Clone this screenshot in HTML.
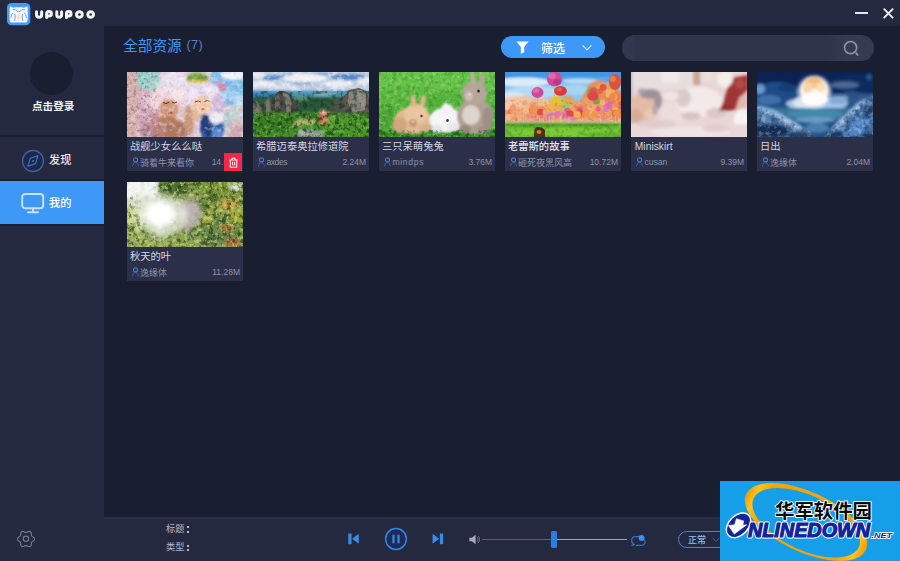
<!DOCTYPE html>
<html lang="zh"><head><meta charset="utf-8"><title>UPUPOO</title>
<style>
*{box-sizing:border-box;margin:0;padding:0}
html,body{width:900px;height:561px;overflow:hidden;background:#1a1e31}
body{position:relative;font-family:"Liberation Sans",sans-serif;color:#d9dde8;font-size:10px}
.abs{position:absolute}
svg{display:block;overflow:visible}
svg.cjk{display:block}
svg.cjk text{font-family:"Liberation Sans","Noto Sans CJK SC",sans-serif;font-size:1000px}
#titlebar{left:0;top:0;width:900px;height:26px;background:#242940}
#sidebar{left:0;top:26px;width:104px;height:535px;background:#242940}
#bottombar{left:104px;top:517px;width:796px;height:44px;background:#242940;box-shadow:inset 0 2px 0 #292e46}
.card{position:absolute;width:116px;height:99px;background:#2b3048}
.card .thumb{position:absolute;left:0;top:0;width:116px;height:65px;overflow:hidden}
.card .title{position:absolute;left:2.6px;top:68.1px;white-space:nowrap;font-size:10.3px;line-height:12px;color:#d2d6e1}
.card .title.lat{left:3.8px;top:69.3px}
.card .auth{position:absolute;left:12.5px;top:85px;white-space:nowrap;font-size:8.6px;line-height:10px;color:#8d93a9}
.card .auth.lat{left:13.4px;top:85.2px;font-size:8.6px}
.card .size{position:absolute;right:3px;top:85.2px;white-space:nowrap;font-size:8.5px;line-height:10px;color:#8d93a9}
.card .person{position:absolute;left:4.5px;top:85.2px}
</style></head>
<body>
<svg width="0" height="0" style="position:absolute;left:-10px;top:-10px" aria-hidden="true"><defs><filter id="b0" x="-20%" y="-20%" width="140%" height="140%"><feGaussianBlur stdDeviation="0.45"/></filter><filter id="b1" x="-20%" y="-20%" width="140%" height="140%"><feGaussianBlur stdDeviation="0.9"/></filter><filter id="b2" x="-20%" y="-20%" width="140%" height="140%"><feGaussianBlur stdDeviation="1.6"/></filter><filter id="b3" x="-20%" y="-20%" width="140%" height="140%"><feGaussianBlur stdDeviation="2.4"/></filter><filter id="tD" x="0" y="0" width="100%" height="100%" color-interpolation-filters="sRGB"><feTurbulence type="fractalNoise" baseFrequency="0.22" numOctaves="3" seed="4"/><feColorMatrix type="matrix" values="0 0 0 0 0.063  0 0 0 0 0.157  0 0 0 0 0.055  5 0 0 0 -2.4"/><feComposite in2="SourceGraphic" operator="in"/></filter><filter id="tY" x="0" y="0" width="100%" height="100%" color-interpolation-filters="sRGB"><feTurbulence type="fractalNoise" baseFrequency="0.26" numOctaves="3" seed="9"/><feColorMatrix type="matrix" values="0 0 0 0 0.839  0 0 0 0 0.910  0 0 0 0 0.471  0 5 0 0 -2.6"/><feComposite in2="SourceGraphic" operator="in"/></filter><filter id="tW" x="0" y="0" width="100%" height="100%" color-interpolation-filters="sRGB"><feTurbulence type="fractalNoise" baseFrequency="0.2" numOctaves="3" seed="14"/><feColorMatrix type="matrix" values="0 0 0 0 1.000  0 0 0 0 1.000  0 0 0 0 1.000  0 0 5 0 -2.5"/><feComposite in2="SourceGraphic" operator="in"/></filter><filter id="tP" x="0" y="0" width="100%" height="100%" color-interpolation-filters="sRGB"><feTurbulence type="fractalNoise" baseFrequency="0.3" numOctaves="3" seed="21"/><feColorMatrix type="matrix" values="0 0 0 0 0.471  0 0 0 0 0.235  0 0 0 0 0.314  5 0 0 0 -2.6"/><feComposite in2="SourceGraphic" operator="in"/></filter><filter id="tR" x="0" y="0" width="100%" height="100%" color-interpolation-filters="sRGB"><feTurbulence type="fractalNoise" baseFrequency="0.3" numOctaves="3" seed="27"/><feColorMatrix type="matrix" values="0 0 0 0 0.839  0 0 0 0 0.235  0 0 0 0 0.275  5 0 0 0 -2.5"/><feComposite in2="SourceGraphic" operator="in"/></filter><filter id="tN" x="0" y="0" width="100%" height="100%" color-interpolation-filters="sRGB"><feTurbulence type="fractalNoise" baseFrequency="0.16" numOctaves="3" seed="33"/><feColorMatrix type="matrix" values="0 0 0 0 0.047  0 0 0 0 0.118  0 0 0 0 0.243  0 5 0 0 -2.5"/><feComposite in2="SourceGraphic" operator="in"/></filter></defs></svg>

<div id="titlebar" class="abs">
 
<svg class="abs" style="left:6.9px;top:2.75px" width="23.3" height="22.3" viewBox="0 0 23.3 22.3">
<rect x="0" y="0" width="23.3" height="22.3" rx="4.6" fill="#459bf6"/>
<path d="M3 3.5 C3.6 3.1 5.2 4 6.2 4.7 C9 4.2 14.4 4.2 17.2 4.7 C18.2 4 19.8 3.1 20.4 3.5 C20.9 4.6 20.7 6.4 20.6 8 C21.1 11 21 16 20.1 19 C19.6 19.6 18.6 19.5 17.4 19.4 L5.9 19.4 C4.7 19.5 3.7 19.6 3.2 19 C2.3 16 2.2 11 2.8 8 C2.7 6.4 2.5 4.6 3 3.5 Z" fill="#f3f8ff"/>
<ellipse cx="11.7" cy="14.6" rx="1.7" ry="3.4" fill="#fde3cf"/>
<g fill="none" stroke="#3f86e0" stroke-width="0.8" stroke-linecap="round">
<path d="M6 6.7 H8.2 M15.2 6.7 H17.4" stroke="#5a78a8"/>
<path d="M9.4 7.6 C10 8.9 11.2 8.9 11.7 8 C12.2 8.9 13.4 8.9 14 7.6"/>
<path d="M5.7 10.4 C4.6 11.6 4 13 4.1 14.4 M7.8 11.4 C8.4 13.4 8.2 15.6 7.6 17.4"/>
<path d="M17.7 10.4 C18.8 11.6 19.4 13 19.3 14.4 M15.6 11.4 C15 13.4 15.2 15.6 15.8 17.4"/>
</g>
</svg>
<svg class="abs" style="left:0;top:0" width="104" height="26" viewBox="0 0 104 26" role="img" aria-label="UPUPOO"><path d="M36.55 11.7 V15.100000000000001 A2.55 2.2 0 0 0 41.65 15.100000000000001 V11.7 M46.7 17.400000000000002 V13.5 A2.35 1.9 0 0 1 51.400000000000006 13.5 V14.0 A2.35 1.9 0 0 1 49.050000000000004 15.899999999999999 H48.1 M56.8 11.7 V15.100000000000001 A2.4 2.2 0 0 0 61.599999999999994 15.100000000000001 V11.7 M66.5 17.400000000000002 V13.5 A2.25 1.9 0 0 1 71.0 13.5 V14.0 A2.25 1.9 0 0 1 68.75 15.899999999999999 H67.9 M76.6 14.0 A2.8 2.3 0 0 1 82.19999999999999 14.0 V15.0 A2.8 2.3 0 0 1 76.6 15.0 Z M87.9 14.0 A2.75 2.3 0 0 1 93.4 14.0 V15.0 A2.75 2.3 0 0 1 87.9 15.0 Z" fill="none" stroke="#f6f7fc" stroke-width="3.0" stroke-linecap="round" stroke-linejoin="round"/></svg>
 <div class="abs" style="left:855px;top:12px;width:13px;height:2px;background:#e4e7f0"></div>
 <svg class="abs" style="left:882.5px;top:8.3px" width="11" height="11" viewBox="0 0 11 11" stroke="#eef0f6" stroke-width="1.9" stroke-linecap="round"><path d="M1.2 1.2 L9.6 9.6 M9.6 1.2 L1.2 9.6"/></svg>
</div>

<div id="sidebar" class="abs">
 <div class="abs" style="left:29.7px;top:25.6px;width:43.6px;height:43.6px;border-radius:50%;background:#1a1e31"></div>
 <div class="abs" style="left:32px;top:73.2px"><svg class="cjk" width="42.40" height="12.30" viewBox="0 -140 4000 1160" fill="#eef0f7" style="" ><text x="0" y="880" font-weight="bold">点击登录</text></svg></div>
 <div class="abs" style="left:0;top:109px;width:104px;height:2px;background:#1b1f33"></div>
 <div class="abs" style="left:0;top:153px;width:104px;height:2px;background:#1b1f33"></div>
 <div class="abs" style="left:0;top:155px;width:104px;height:43px;background:#3e98f8"></div>
 <div class="abs" style="left:0;top:198px;width:104px;height:2px;background:#1b1f33"></div>
 <svg class="abs" style="left:21px;top:123.3px" width="24" height="24" viewBox="0 0 24 24" fill="none">
   <circle cx="12" cy="12" r="10.5" stroke="#3e609c" stroke-width="1.4" fill="#1b2852"/>
   <path d="M16.8 6.8 L14.6 14.6 L6.9 17.2 L9.3 9.3 Z" stroke="#4a70b2" stroke-width="1.15" stroke-linejoin="round"/>
   <circle cx="12" cy="12" r="1" fill="#4a70b2"/>
 </svg>
 <div class="abs" style="left:49px;top:126.7px"><svg class="cjk" width="22.40" height="12.99" viewBox="0 -140 2000 1160" fill="#e8ebf3" style="" ><text x="0" y="880" font-weight="500">发现</text></svg></div>
 <svg class="abs" style="left:21px;top:166px" width="24" height="22" viewBox="0 0 24 22" fill="none" stroke="#c9e2ff" stroke-width="1.9" stroke-linecap="round">
   <rect x="1.2" y="2" width="21" height="14.2" rx="3"/>
   <path d="M12 16.4 V20 M7 20.2 H17"/>
 </svg>
 <div class="abs" style="left:49px;top:169.5px"><svg class="cjk" width="22.40" height="12.99" viewBox="0 -140 2000 1160" fill="#ffffff" style="" ><text x="0" y="880" font-weight="500">我的</text></svg></div>
 <svg class="abs" style="left:16px;top:503.3px" width="20" height="20" viewBox="0 0 20 20" fill="none" stroke="#747a92" stroke-width="1.15" stroke-linejoin="round">
   <path d="M18.55 10.00 L18.38 10.73 L17.90 11.39 L17.24 11.94 L16.55 12.39 L15.97 12.79 L15.59 13.22 L15.40 13.78 L15.34 14.48 L15.30 15.30 L15.16 16.15 L14.82 16.89 L14.28 17.40 L13.55 17.62 L12.74 17.54 L11.94 17.24 L11.21 16.87 L10.57 16.57 L10.00 16.45 L9.43 16.57 L8.79 16.87 L8.06 17.24 L7.26 17.54 L6.45 17.62 L5.73 17.40 L5.18 16.89 L4.84 16.15 L4.70 15.30 L4.66 14.48 L4.60 13.78 L4.41 13.23 L4.03 12.79 L3.45 12.39 L2.76 11.94 L2.10 11.39 L1.62 10.73 L1.45 10.00 L1.62 9.27 L2.10 8.61 L2.76 8.06 L3.45 7.61 L4.03 7.21 L4.41 6.77 L4.60 6.22 L4.66 5.52 L4.70 4.70 L4.84 3.85 L5.18 3.11 L5.72 2.60 L6.45 2.38 L7.26 2.46 L8.06 2.76 L8.79 3.13 L9.43 3.43 L10.00 3.55 L10.57 3.43 L11.21 3.13 L11.94 2.76 L12.74 2.46 L13.55 2.38 L14.27 2.60 L14.82 3.11 L15.16 3.85 L15.30 4.70 L15.34 5.52 L15.40 6.22 L15.59 6.78 L15.97 7.21 L16.55 7.61 L17.24 8.06 L17.90 8.61 L18.38 9.27 Z"/>
   <circle cx="10" cy="9.8" r="2.7"/>
 </svg>
</div>

<div class="abs" style="left:122.5px;top:36.4px"><svg class="cjk" width="58.80" height="17.05" viewBox="0 -140 4000 1160" fill="#3d97f5" style="" ><text x="0" y="880">全部资源</text></svg></div>
<div class="abs" style="left:186.6px;top:37.6px;font-size:12.6px;line-height:14px;color:#5585c6;letter-spacing:0.3px">(7)</div>
<div class="abs" style="left:501px;top:36px;width:104.4px;height:22px;border-radius:11px;background:#3e98f8">
 <svg class="abs" style="left:15.4px;top:4.6px" width="13" height="13" viewBox="0 0 14 14" fill="#ffffff"><path d="M0.4 0.5 H13.6 L8.8 6.4 V12.2 L5.2 13.6 V6.4 Z"/></svg>
 <div class="abs" style="left:39.5px;top:4.5px"><svg class="cjk" width="24.00" height="13.92" viewBox="0 -140 2000 1160" fill="#ffffff" style="" ><text x="0" y="880" font-weight="500">筛选</text></svg></div>
 <svg class="abs" style="left:80.5px;top:8.6px" width="10" height="6.2" viewBox="0 0 11 7" fill="none" stroke="#e8f2ff" stroke-width="1.3" stroke-linecap="round" stroke-linejoin="round"><path d="M0.8 0.8 L5.5 5.6 L10.2 0.8"/></svg>
</div>
<div class="abs" style="left:622px;top:35px;width:252px;height:26px;border-radius:13px;background:linear-gradient(90deg,#33384f 0,#33384f 10px,#2f344a 13px,#2f344a 205px,#353a51 222px,#353a51 100%)">
 <svg class="abs" style="left:221px;top:4.5px" width="18" height="18" viewBox="0 0 18 18" fill="none" stroke="#8d92a6" stroke-width="1.7" stroke-linecap="round"><circle cx="7.6" cy="7.6" r="6.1"/><path d="M13.2 13.2 L14.6 14.8" stroke-width="2"/></svg>
</div>
<div class="card" style="left:127px;top:72px"><div class="thumb"><svg width="116" height="65" viewBox="0 0 116 65"><rect x="0" y="0" width="116" height="65" fill="#dfc6d2"/><g filter="url(#b2)"><rect x="-3" y="-3" width="13" height="71" fill="#d4aea8"/><rect x="10" y="-3" width="23" height="21" fill="#88c8c0"/><ellipse cx="30" cy="13" rx="8" ry="7" fill="#a6d6ce"/><ellipse cx="18" cy="6" rx="7" ry="5" fill="#9ad6cc"/><rect x="84" y="-3" width="35" height="36" fill="#7cbcea"/><ellipse cx="106" cy="3" rx="12" ry="5" fill="#f2f5fb"/><ellipse cx="100" cy="22" rx="10" ry="6" fill="#a0ceee"/><ellipse cx="112" cy="28" rx="6" ry="6" fill="#b4d8f0"/><ellipse cx="47" cy="7" rx="14" ry="8" fill="#ebe2f0"/><ellipse cx="64" cy="14" rx="8" ry="6" fill="#e6daee"/><ellipse cx="18" cy="40" rx="8" ry="22" fill="#cfa6b8"/><ellipse cx="14" cy="24" rx="5" ry="9" fill="#d8b0bc"/><ellipse cx="21" cy="30" rx="6" ry="7" fill="#e2c2d2"/><ellipse cx="41" cy="28" rx="16" ry="15" fill="#ecd0da"/><ellipse cx="30" cy="46" rx="8" ry="16" fill="#d6a8b6"/><ellipse cx="52" cy="22" rx="8" ry="7" fill="#f5e4ec"/><ellipse cx="36" cy="18" rx="8" ry="5" fill="#f4dce4"/><ellipse cx="28" cy="30" rx="5" ry="8" fill="#f0d6de"/><ellipse cx="77" cy="26" rx="17" ry="15" fill="#e4d6ec"/><ellipse cx="91" cy="34" rx="6" ry="13" fill="#d4bcda"/><ellipse cx="66" cy="24" rx="6" ry="9" fill="#efe4f2"/><ellipse cx="84" cy="18" rx="8" ry="6" fill="#eee6f4"/><ellipse cx="108" cy="42" rx="9" ry="10" fill="#c6d2d4"/><ellipse cx="108" cy="58" rx="9" ry="9" fill="#d2a8b2"/><ellipse cx="100" cy="50" rx="4" ry="12" fill="#b2cace"/><ellipse cx="40" cy="58" rx="25" ry="11" fill="#b5837a"/><ellipse cx="20" cy="60" rx="8" ry="6" fill="#b88c94"/><ellipse cx="28" cy="50" rx="6" ry="10" fill="#c6929a"/></g><g filter="url(#b1)"><ellipse cx="42" cy="38" rx="9.5" ry="11" fill="#d09a7a"/><ellipse cx="40" cy="50" rx="10" ry="6" fill="#b98064"/><ellipse cx="47" cy="58" rx="11" ry="8" fill="#ae7860"/><ellipse cx="33" cy="58" rx="7" ry="6" fill="#b4807a"/><ellipse cx="75" cy="33" rx="10" ry="9" fill="#f0caaa"/><ellipse cx="62" cy="48" rx="5" ry="14" fill="#cc9a7c"/><ellipse cx="69" cy="43" rx="5" ry="6" fill="#e4ba9c"/><ellipse cx="70.5" cy="6" rx="10.5" ry="5" fill="#62943a"/><ellipse cx="70.5" cy="9.2" rx="11" ry="1.6" fill="#d8ca4c"/><ellipse cx="70" cy="2.5" rx="7" ry="2" fill="#84ae4c"/><ellipse cx="66" cy="5" rx="3" ry="2" fill="#7ab048"/><ellipse cx="95.5" cy="15" rx="3.8" ry="4" fill="#dc84aa"/><ellipse cx="91" cy="11" rx="2.4" ry="2.4" fill="#e6a0c0"/><ellipse cx="85" cy="57" rx="12" ry="14" fill="#335ca8"/><ellipse cx="78" cy="52" rx="5" ry="10" fill="#233f80"/><ellipse cx="90" cy="62" rx="6" ry="6" fill="#5a8cd4"/><ellipse cx="89.5" cy="46" rx="7.5" ry="6" fill="#ebecf4"/><ellipse cx="82" cy="60" rx="3" ry="6" fill="#1f3870"/></g><g filter="url(#b0)"><path d="M36 30.5 Q39 32.5 42 30.5 M45 30 Q47.5 32 50 30" fill="none" stroke="#5a3428" stroke-width="1"/><path d="M68 30 Q71 28 74 30 M77.5 29.5 Q80.5 27.5 83 29.5" fill="none" stroke="#6a4032" stroke-width="1"/><ellipse cx="43.5" cy="41" rx="2" ry="1.2" fill="#b05848"/><ellipse cx="76" cy="37" rx="1.8" ry="1" fill="#d07868"/></g><rect x="0" y="0" width="30" height="65" fill="#000" filter="url(#tP)" opacity="0.4"/><rect x="30" y="0" width="86" height="65" fill="#000" filter="url(#tP)" opacity="0.1"/><rect x="0" y="0" width="116" height="65" fill="#000" filter="url(#tW)" opacity="0.3"/></svg></div><div class="title"><svg class="cjk" width="72.10" height="11.95" viewBox="0 -140 7000 1160" fill="#d2d6e1" style="" ><text x="0" y="880">战舰少女么么哒</text></svg></div><svg class="person" width="7" height="9.6" viewBox="0 0 7 9.6" fill="none" stroke="#4a76be"><circle cx="3.5" cy="2.9" r="2.05" stroke-width="1.15"/><path d="M0.6 9.2 C0.8 6.6 2 5.6 3.5 5.6 C5 5.6 6.2 6.6 6.4 9.2" stroke-width="1" opacity=".75"/></svg><div class="auth"><svg class="cjk" width="54.00" height="10.44" viewBox="0 -140 6000 1160" fill="#8d93a9" style="" ><text x="0" y="880">骑着牛来看你</text></svg></div><div class="size">14.52M</div><div class="abs" style="left:97px;top:81px;width:18px;height:18px;background:#f0294b"><svg class="abs" style="left:4.5px;top:3.5px" width="9" height="11" viewBox="0 0 9 11" fill="none" stroke="#ffe3e6" stroke-width="1.1"><path d="M0.3 3 H8.7 M2.6 2.8 C2.6 0.6 6.4 0.6 6.4 2.8 M1.3 3.2 V10.3 H7.7 V3.2 M3.5 4.8 V8.6 M5.5 4.8 V8.6"/></svg></div></div><div class="card" style="left:253px;top:72px"><div class="thumb"><svg width="116" height="65" viewBox="0 0 116 65"><rect x="0" y="0" width="116" height="65" fill="#479030"/><g filter="url(#b1)"><rect x="-3" y="-3" width="122" height="23" fill="#bccbe0"/><ellipse cx="18" cy="6" rx="9" ry="2.6" fill="#5c92d0"/><ellipse cx="30" cy="3" rx="10" ry="2" fill="#6a9cd4"/><ellipse cx="95" cy="5" rx="17" ry="3.2" fill="#5287c8"/><ellipse cx="70" cy="2" rx="10" ry="1.5" fill="#7aa6d6"/><ellipse cx="50" cy="11" rx="10" ry="1.6" fill="#86aad4"/><ellipse cx="52" cy="6" rx="22" ry="4" fill="#efeef3"/><ellipse cx="10" cy="12" rx="12" ry="3.4" fill="#e4e6ee"/><ellipse cx="86" cy="12" rx="14" ry="3.6" fill="#ebebf0"/><ellipse cx="112" cy="9" rx="8" ry="3" fill="#e6e8ee"/><ellipse cx="30" cy="15" rx="14" ry="2.4" fill="#d6dce8"/><ellipse cx="5" cy="3" rx="8" ry="3" fill="#e6e8f0"/><rect x="-3" y="18.5" width="122" height="5" fill="#4f97bc"/><rect x="-3" y="20.5" width="40" height="6" fill="#3182b2"/><rect x="35" y="22" width="60" height="4" fill="#4a94a6"/><ellipse cx="72" cy="22.5" rx="12" ry="1.6" fill="#7ab0b8"/><rect x="-3" y="25" width="122" height="15" fill="#2f5c42"/><ellipse cx="60" cy="31" rx="20" ry="6" fill="#2a563a"/><ellipse cx="84" cy="33" rx="9" ry="6" fill="#38563c"/><ellipse cx="48" cy="27" rx="8" ry="2" fill="#5a8a6a"/></g><g filter="url(#b0)"><path d="M19 43 L19.5 28 L23 21 L27 19 L33 19.5 L38 23 L41 30 L42.5 42 Z" fill="#4e4c48"/><path d="M29 20.5 L35 22 L39 30 L38 40 L33.5 41 L32 28 Z" fill="#7e7a74"/><path d="M22 26 L26 22 L27 36 L22 40 Z" fill="#6a665e"/><path d="M10 45 L11 30 L14 26 L17.5 27 L19 43 Z" fill="#625c54"/><path d="M13 29 L16 28 L17 40 L13.5 41 Z" fill="#7c766e"/><path d="M-1 49 L0 31 L4 29 L8 36 L9.5 49 Z" fill="#6e665e"/><path d="M2 33 L5 32 L7 45 L3 46 Z" fill="#7e786e"/><ellipse cx="43.5" cy="34" rx="2.6" ry="5" fill="#4a4a44"/><path d="M88 43 L90 26 L96 18 L106 16 L113 19 L117 28 L117 43 Z" fill="#5c5650"/><path d="M96 20 L108 17.5 L113 22 L112 38 L100 41 L94.5 30 Z" fill="#88837c"/><path d="M104 18 L112 21 L113 34 L108 36 Z" fill="#96908a"/><path d="M80 41 L82 28 L87 25 L90 30 L89 42 Z" fill="#50524a"/></g><g filter="url(#b1)"><rect x="-3" y="41" width="122" height="28" fill="#43902a"/><ellipse cx="20" cy="52" rx="22" ry="9" fill="#377c22"/><ellipse cx="96" cy="54" rx="22" ry="9" fill="#46962c"/><ellipse cx="58" cy="44" rx="16" ry="3" fill="#34702a"/><ellipse cx="25" cy="42" rx="16" ry="2.6" fill="#3c7e2c"/><ellipse cx="100" cy="43" rx="16" ry="2.4" fill="#387c2a"/><ellipse cx="52" cy="50" rx="11" ry="2.4" fill="#b6b476"/><ellipse cx="45" cy="53" rx="6" ry="1.5" fill="#a4ac6a"/><path d="M66 52 L66.5 41 L70 37.5 L75 38.5 L77 43 L76 52 Z" fill="#cf6c56"/><ellipse cx="71" cy="39.6" rx="4" ry="2.2" fill="#e6c8b8"/><ellipse cx="57" cy="62" rx="14" ry="4" fill="#8f979c"/><ellipse cx="50" cy="60" rx="4" ry="2" fill="#b0b8bc"/><ellipse cx="80" cy="47" rx="8" ry="3" fill="#5aa838"/></g><rect x="0" y="41" width="116" height="24" fill="#000" filter="url(#tD)" opacity="0.6"/><rect x="0" y="41" width="116" height="24" fill="#000" filter="url(#tY)" opacity="0.3"/><rect x="0" y="19" width="116" height="22" fill="#000" filter="url(#tD)" opacity="0.45"/><rect x="0" y="0" width="116" height="19" fill="#000" filter="url(#tW)" opacity="0.4"/></svg></div><div class="title"><svg class="cjk" width="92.70" height="11.95" viewBox="0 -140 9000 1160" fill="#d2d6e1" style="" ><text x="0" y="880">希腊迈泰奥拉修道院</text></svg></div><svg class="person" width="7" height="9.6" viewBox="0 0 7 9.6" fill="none" stroke="#4a76be"><circle cx="3.5" cy="2.9" r="2.05" stroke-width="1.15"/><path d="M0.6 9.2 C0.8 6.6 2 5.6 3.5 5.6 C5 5.6 6.2 6.6 6.4 9.2" stroke-width="1" opacity=".75"/></svg><div class="auth lat"><span style="letter-spacing:-0.45px">axdes</span></div><div class="size">2.24M</div></div><div class="card" style="left:379px;top:72px"><div class="thumb"><svg width="116" height="65" viewBox="0 0 116 65"><rect x="0" y="0" width="116" height="65" fill="#56b83e"/><g filter="url(#b1)"><rect x="-3" y="-3" width="122" height="22" fill="#64c44a"/><ellipse cx="30" cy="22" rx="30" ry="8" fill="#5cbc42"/><ellipse cx="90" cy="60" rx="30" ry="7" fill="#3f9e2e"/><rect x="-3" y="58" width="122" height="10" fill="#35902a"/><ellipse cx="8" cy="46" rx="10" ry="14" fill="#4aaa38"/><ellipse cx="60" cy="30" rx="30" ry="8" fill="#52b43c"/></g><rect x="0" y="0" width="116" height="65" fill="#000" filter="url(#tD)" opacity="0.16"/><rect x="0" y="0" width="116" height="65" fill="#000" filter="url(#tY)" opacity="0.3"/><g filter="url(#b1)"><ellipse cx="34" cy="48.5" rx="19" ry="13.5" fill="#e1b992"/><ellipse cx="37" cy="42" rx="12" ry="10" fill="#e9c6a0"/><ellipse cx="20.5" cy="53" rx="7" ry="8" fill="#d2a680"/><ellipse cx="34.5" cy="29" rx="2.6" ry="6.4" fill="#e2b490" transform="rotate(-8 34.5 29)"/><ellipse cx="44" cy="29" rx="2.6" ry="6.4" fill="#e2b490" transform="rotate(10 44 29)"/><ellipse cx="34" cy="51" rx="4" ry="4" fill="#c6987a"/><ellipse cx="46" cy="56" rx="6" ry="4" fill="#d8ae88"/><ellipse cx="67" cy="48" rx="16.5" ry="12.5" fill="#f6f6f9"/><path d="M57 42 L66 30.5 L72 33 L79 43 Z" fill="#f2f2f7"/><ellipse cx="58" cy="57" rx="6" ry="4" fill="#e2e4ea"/><ellipse cx="74" cy="55" rx="7" ry="5" fill="#e8e8ee"/><ellipse cx="96" cy="44" rx="18" ry="18" fill="#b0a195"/><ellipse cx="95.5" cy="21" rx="12.4" ry="12" fill="#b5a69a"/><ellipse cx="94" cy="6" rx="2.7" ry="6.4" fill="#bcaca0" transform="rotate(-4 94 6)"/><ellipse cx="103.5" cy="7" rx="2.7" ry="6.4" fill="#b6a69a" transform="rotate(8 103.5 7)"/><ellipse cx="92" cy="43" rx="9" ry="10" fill="#ded4ce"/><ellipse cx="108.5" cy="47" rx="5" ry="12" fill="#9e9084"/><ellipse cx="90" cy="24" rx="4" ry="5" fill="#cabeb6"/><ellipse cx="86" cy="57" rx="6" ry="4" fill="#988a7e"/><ellipse cx="104" cy="58" rx="6" ry="4" fill="#a09286"/></g><g filter="url(#b0)"><ellipse cx="42.5" cy="44" rx="1.2" ry="1.3" fill="#5a3030"/><ellipse cx="68.5" cy="48.5" rx="1.3" ry="1.4" fill="#403038"/><ellipse cx="99.5" cy="19" rx="1.3" ry="1.5" fill="#2c2420"/><ellipse cx="34" cy="49.5" rx="1.6" ry="1.4" fill="#e8b0a8"/><ellipse cx="90.5" cy="22.5" rx="1.6" ry="1.6" fill="#ecc8c8"/></g><rect x="0" y="58" width="116" height="7" fill="#000" filter="url(#tD)" opacity="0.4"/></svg></div><div class="title"><svg class="cjk" width="61.80" height="11.95" viewBox="0 -140 6000 1160" fill="#d2d6e1" style="" ><text x="0" y="880">三只呆萌兔兔</text></svg></div><svg class="person" width="7" height="9.6" viewBox="0 0 7 9.6" fill="none" stroke="#4a76be"><circle cx="3.5" cy="2.9" r="2.05" stroke-width="1.15"/><path d="M0.6 9.2 C0.8 6.6 2 5.6 3.5 5.6 C5 5.6 6.2 6.6 6.4 9.2" stroke-width="1" opacity=".75"/></svg><div class="auth lat"><span style="letter-spacing:0.7px">mindps</span></div><div class="size">3.76M</div></div><div class="card" style="left:505px;top:72px"><div class="thumb"><svg width="116" height="65" viewBox="0 0 116 65"><rect x="0" y="0" width="116" height="65" fill="#8cc6ee"/><g filter="url(#b1)"><rect x="-3" y="-3" width="122" height="9" fill="#3f97e2"/><rect x="-3" y="5" width="122" height="6" fill="#5aa8e6"/><ellipse cx="18" cy="10" rx="26" ry="4.6" fill="#dcebf8"/><ellipse cx="75" cy="9" rx="18" ry="2.4" fill="#b8daf4"/><ellipse cx="30" cy="20" rx="30" ry="6" fill="#b6d9f4"/><ellipse cx="8" cy="24" rx="12" ry="4" fill="#d6e6f4"/><ellipse cx="70" cy="18" rx="14" ry="5" fill="#a8d4f2"/><path d="M74 32 L84 12 L92 8 L100 10 L117 20 L117 50 L68 50 Z" fill="#e78e58"/><ellipse cx="88" cy="20" rx="6" ry="5" fill="#74a04c"/><ellipse cx="99" cy="15" rx="8" ry="4" fill="#e9a24c"/><ellipse cx="108" cy="25" rx="8" ry="6" fill="#e97e4e"/><ellipse cx="97" cy="32" rx="7" ry="5" fill="#ef9c5e"/><ellipse cx="82" cy="30" rx="5" ry="5" fill="#e8a060"/><path d="M-3 27 L20 24 L40 29 L60 27 L80 30 L117 30 L117 51 L-3 51 Z" fill="#ee9e68"/><ellipse cx="14" cy="30" rx="17" ry="6" fill="#f3c4a2"/><ellipse cx="4" cy="37" rx="8" ry="6" fill="#ec9068"/><ellipse cx="16" cy="41" rx="10" ry="5" fill="#f0a878"/><ellipse cx="30" cy="36" rx="10" ry="6" fill="#ee9460"/><ellipse cx="38" cy="30" rx="8" ry="4" fill="#f4c09a"/><ellipse cx="58" cy="34" rx="9" ry="5" fill="#a8ca60"/><ellipse cx="51.5" cy="29.5" rx="6.5" ry="6.5" fill="#e2c234"/><ellipse cx="63" cy="27" rx="5" ry="3" fill="#e8a050"/><ellipse cx="48" cy="37" rx="6" ry="4" fill="#f0b050"/><ellipse cx="66" cy="45" rx="7" ry="5" fill="#e270bc"/><ellipse cx="76" cy="39" rx="5" ry="5.5" fill="#e04858"/><ellipse cx="103" cy="33.5" rx="4" ry="4" fill="#de62c2"/><ellipse cx="46" cy="44" rx="5" ry="4" fill="#d070c0"/><ellipse cx="60" cy="42" rx="4" ry="3" fill="#e86aa8"/><ellipse cx="92" cy="42" rx="10" ry="5" fill="#f09a62"/><ellipse cx="112" cy="40" rx="6" ry="8" fill="#ea8a52"/><ellipse cx="30" cy="45" rx="10" ry="3" fill="#ea8a80"/><ellipse cx="86" cy="37" rx="5" ry="4" fill="#f0b070"/><rect x="-3" y="47.5" width="122" height="4" fill="#d9b8a0" opacity="0.75"/><rect x="-3" y="50.5" width="122" height="18" fill="#6cc032"/><ellipse cx="30" cy="53" rx="34" ry="2.2" fill="#4fa02a"/><ellipse cx="85" cy="53" rx="30" ry="2" fill="#4fa02a"/><ellipse cx="60" cy="60" rx="60" ry="4" fill="#7ccc38"/><ellipse cx="100" cy="63" rx="20" ry="3" fill="#62b430"/></g><rect x="0" y="28" width="116" height="21" fill="#000" filter="url(#tR)" opacity="0.3"/><rect x="0" y="28" width="116" height="21" fill="#000" filter="url(#tY)" opacity="0.25"/><rect x="0" y="52" width="116" height="13" fill="#000" filter="url(#tD)" opacity="0.18"/><g filter="url(#b0)"><ellipse cx="72.3" cy="42.6" rx="3.5" ry="3.3" fill="#f6b05a"/><ellipse cx="3.4" cy="45.1" rx="3.2" ry="3.1" fill="#f2b890"/><ellipse cx="100.7" cy="37.9" rx="2.4" ry="2.2" fill="#e274b4"/><ellipse cx="1.5" cy="34.5" rx="3.7" ry="3.5" fill="#f4c8a6"/><ellipse cx="16.1" cy="32.0" rx="2.2" ry="2.1" fill="#f4c8a6"/><ellipse cx="111.4" cy="35.2" rx="2.5" ry="2.3" fill="#f29444"/><ellipse cx="111.5" cy="40.0" rx="3.3" ry="3.1" fill="#e274b4"/><ellipse cx="21.1" cy="33.2" rx="3.7" ry="3.6" fill="#f2b890"/><ellipse cx="48.1" cy="45.2" rx="2.6" ry="2.5" fill="#f29444"/><ellipse cx="35.0" cy="30.1" rx="3.3" ry="3.1" fill="#f2b890"/><ellipse cx="94.9" cy="39.2" rx="2.7" ry="2.6" fill="#ee8878"/><ellipse cx="54.8" cy="35.3" rx="2.6" ry="2.5" fill="#f2a262"/><ellipse cx="110.1" cy="37.6" rx="2.8" ry="2.7" fill="#f6b05a"/><ellipse cx="91.4" cy="37.8" rx="3.1" ry="3.0" fill="#f2a262"/><ellipse cx="52.5" cy="42.2" rx="3.2" ry="3.0" fill="#e274b4"/><ellipse cx="13.8" cy="43.1" rx="2.9" ry="2.8" fill="#f0a878"/><ellipse cx="29.1" cy="39.4" rx="3.4" ry="3.3" fill="#f29444"/><ellipse cx="4.2" cy="31.5" rx="2.7" ry="2.6" fill="#f4c8a6"/><ellipse cx="39.4" cy="38.7" rx="2.7" ry="2.6" fill="#f29444"/><ellipse cx="35.5" cy="40.0" rx="3.4" ry="3.2" fill="#e24a4a"/><ellipse cx="115.6" cy="35.1" rx="2.3" ry="2.2" fill="#e85c8c"/><ellipse cx="61.9" cy="38.3" rx="2.6" ry="2.5" fill="#e85c8c"/><ellipse cx="39.9" cy="40.4" rx="2.4" ry="2.3" fill="#f2a262"/><ellipse cx="93.0" cy="37.3" rx="2.5" ry="2.4" fill="#e85c8c"/><ellipse cx="110.2" cy="41.2" rx="3.5" ry="3.3" fill="#ea6c52"/><ellipse cx="19.6" cy="30.9" rx="2.9" ry="2.7" fill="#f0a878"/><ellipse cx="98.9" cy="45.7" rx="2.9" ry="2.8" fill="#ee8878"/><ellipse cx="79.9" cy="37.1" rx="2.6" ry="2.5" fill="#ee8878"/><ellipse cx="46.8" cy="34.9" rx="2.8" ry="2.7" fill="#f6b05a"/><ellipse cx="111.3" cy="41.2" rx="3.0" ry="2.8" fill="#f29444"/><ellipse cx="20.9" cy="38.2" rx="3.1" ry="2.9" fill="#f2b890"/><ellipse cx="80.6" cy="41.6" rx="3.4" ry="3.2" fill="#f29444"/><ellipse cx="64.9" cy="41.7" rx="3.5" ry="3.4" fill="#e24a4a"/><ellipse cx="89.3" cy="42.0" rx="2.7" ry="2.5" fill="#f29444"/><ellipse cx="102.7" cy="23.6" rx="2.2" ry="2.2" fill="#f0b46a"/><ellipse cx="107.4" cy="18.5" rx="2.6" ry="2.6" fill="#f2a45c"/><ellipse cx="109.0" cy="24.9" rx="3.3" ry="3.3" fill="#f2a45c"/><ellipse cx="88.4" cy="18.9" rx="3.5" ry="3.5" fill="#e2524a"/><ellipse cx="91.3" cy="28.9" rx="3.4" ry="3.4" fill="#78a24e"/><ellipse cx="95.1" cy="19.3" rx="2.7" ry="2.7" fill="#e8643e"/><ellipse cx="98.1" cy="15.3" rx="3.4" ry="3.4" fill="#e2524a"/><ellipse cx="103.5" cy="20.3" rx="3.1" ry="3.1" fill="#f0b46a"/><ellipse cx="97.6" cy="30.7" rx="2.6" ry="2.6" fill="#f0b46a"/><ellipse cx="107.4" cy="24.7" rx="3.2" ry="3.2" fill="#ee8a4e"/><ellipse cx="85.4" cy="23.7" rx="3.1" ry="3.1" fill="#e8643e"/><ellipse cx="86.3" cy="25.7" rx="3.1" ry="3.1" fill="#ee8a4e"/><ellipse cx="115.5" cy="31.6" rx="2.4" ry="2.4" fill="#e8643e"/><rect x="12.9" y="44" width="0.7" height="7.4" fill="#e8d8c0" opacity="0.4"/><rect x="56.0" y="44" width="0.7" height="6.4" fill="#e8d8c0" opacity="0.4"/><rect x="48.2" y="44" width="0.7" height="5.9" fill="#e8d8c0" opacity="0.4"/><rect x="76.9" y="44" width="0.7" height="5.2" fill="#e8d8c0" opacity="0.4"/><rect x="23.7" y="44" width="0.7" height="6.8" fill="#e8d8c0" opacity="0.4"/><rect x="43.4" y="44" width="0.7" height="5.9" fill="#e8d8c0" opacity="0.4"/><rect x="110.4" y="44" width="0.7" height="7.1" fill="#e8d8c0" opacity="0.4"/><rect x="100.5" y="44" width="0.7" height="6.7" fill="#e8d8c0" opacity="0.4"/><rect x="63.5" y="44" width="0.7" height="7.4" fill="#e8d8c0" opacity="0.4"/><rect x="63.8" y="44" width="0.7" height="5.8" fill="#e8d8c0" opacity="0.4"/><rect x="34.3" y="44" width="0.7" height="6.3" fill="#e8d8c0" opacity="0.4"/><rect x="110.3" y="44" width="0.7" height="5.7" fill="#e8d8c0" opacity="0.4"/><rect x="40.8" y="44" width="0.7" height="5.3" fill="#e8d8c0" opacity="0.4"/><rect x="47.5" y="44" width="0.7" height="6.4" fill="#e8d8c0" opacity="0.4"/><rect x="62.5" y="44" width="0.7" height="6.2" fill="#e8d8c0" opacity="0.4"/><rect x="18.2" y="44" width="0.7" height="6.0" fill="#e8d8c0" opacity="0.4"/><rect x="55.3" y="44" width="0.7" height="5.5" fill="#e8d8c0" opacity="0.4"/><rect x="15.4" y="44" width="0.7" height="5.2" fill="#e8d8c0" opacity="0.4"/><rect x="95.3" y="44" width="0.7" height="6.7" fill="#e8d8c0" opacity="0.4"/><rect x="44.3" y="44" width="0.7" height="5.8" fill="#e8d8c0" opacity="0.4"/><rect x="106.3" y="44" width="0.7" height="6.3" fill="#e8d8c0" opacity="0.4"/><rect x="37.8" y="44" width="0.7" height="7.2" fill="#e8d8c0" opacity="0.4"/><rect x="65.5" y="44" width="0.7" height="6.1" fill="#e8d8c0" opacity="0.4"/><rect x="113.3" y="44" width="0.7" height="6.2" fill="#e8d8c0" opacity="0.4"/><rect x="55.6" y="44" width="0.7" height="6.8" fill="#e8d8c0" opacity="0.4"/><rect x="44.5" y="44" width="0.7" height="7.1" fill="#e8d8c0" opacity="0.4"/></g><g filter="url(#b0)"><ellipse cx="49.5" cy="7" rx="7.6" ry="7.4" fill="#d2489a"/><ellipse cx="47" cy="4" rx="4" ry="3" fill="#e068b0"/><ellipse cx="52" cy="10" rx="4" ry="3" fill="#b83a86"/><rect x="49" y="14" width="1" height="10" fill="#c8b8a0"/><ellipse cx="32.5" cy="20.5" rx="6" ry="5.4" fill="#cf4a9a"/><ellipse cx="31" cy="18.5" rx="3" ry="2.4" fill="#e06ab2"/><rect x="32" y="26" width="1" height="8" fill="#c8b8a0"/><ellipse cx="55.5" cy="19" rx="6.4" ry="4.8" fill="#d63a3a"/><ellipse cx="54" cy="17.5" rx="3" ry="2" fill="#e85a4a"/><ellipse cx="110" cy="10" rx="6" ry="8" fill="#da523e"/><ellipse cx="108" cy="7" rx="3" ry="3" fill="#ec7a50"/><ellipse cx="88" cy="24" rx="5.6" ry="4.6" fill="#e0444e"/><path d="M29 65 L29.5 57 L32 55 L37 55.5 L40 58 L40 65 Z" fill="#4c3018"/><ellipse cx="34" cy="60" rx="2.5" ry="2" fill="#c88030"/></g></svg></div><div class="title"><svg class="cjk" width="61.80" height="11.95" viewBox="0 -140 6000 1160" fill="#e2e5ee" style="" ><text x="0" y="880" font-weight="500">老雷斯的故事</text></svg></div><svg class="person" width="7" height="9.6" viewBox="0 0 7 9.6" fill="none" stroke="#4a76be"><circle cx="3.5" cy="2.9" r="2.05" stroke-width="1.15"/><path d="M0.6 9.2 C0.8 6.6 2 5.6 3.5 5.6 C5 5.6 6.2 6.6 6.4 9.2" stroke-width="1" opacity=".75"/></svg><div class="auth"><svg class="cjk" width="54.00" height="10.44" viewBox="0 -140 6000 1160" fill="#8d93a9" style="" ><text x="0" y="880">砸死夜黑风高</text></svg></div><div class="size">10.72M</div></div><div class="card" style="left:631px;top:72px"><div class="thumb"><svg width="116" height="65" viewBox="0 0 116 65"><rect x="0" y="0" width="116" height="65" fill="#e8d6d6"/><g filter="url(#b2)"><rect x="-3" y="-3" width="65" height="20" fill="#e6dedd"/><rect x="-3" y="-3" width="4.5" height="71" fill="#c0b8be"/><rect x="30" y="-3" width="18" height="14" fill="#efe9e8"/><ellipse cx="12" cy="35" rx="12.5" ry="14.5" fill="#e4bca6"/><ellipse cx="5" cy="44" rx="7" ry="7" fill="#d9ae98"/><ellipse cx="20" cy="42" rx="6" ry="6" fill="#e8c8b8"/><ellipse cx="19" cy="22" rx="10" ry="5" fill="#9a929a"/><ellipse cx="27" cy="29" rx="4" ry="8" fill="#a2949c"/><ellipse cx="24" cy="38" rx="3" ry="5" fill="#b8a8ae"/><ellipse cx="11" cy="19" rx="4" ry="2.4" fill="#aaa2a8"/><ellipse cx="45" cy="40" rx="16" ry="12" fill="#ecdcdc"/><ellipse cx="68" cy="30" rx="24" ry="15" fill="#f3e9e9"/><ellipse cx="52" cy="26" rx="8" ry="9" fill="#dccaca"/><ellipse cx="85" cy="41" rx="10" ry="5" fill="#dcc6c6"/><ellipse cx="40" cy="24" rx="8" ry="4" fill="#f0e6e6"/><ellipse cx="60" cy="44" rx="10" ry="4" fill="#d8c2c2"/><rect x="62" y="-3" width="7.5" height="16" fill="#c8a896"/><rect x="69.5" y="-3" width="12" height="12" fill="#e8dfdc"/><path d="M100 6 L117 3 L117 20 L104 38 L88 39 L92 30 Z" fill="#a03636"/><ellipse cx="109" cy="12" rx="5" ry="5" fill="#b24c46"/><ellipse cx="96" cy="36" rx="6" ry="2.6" fill="#8a2e2e"/><path d="M108 26 L117 18 L117 34 L104 40 Z" fill="#e4b8ae"/><ellipse cx="94" cy="7" rx="8" ry="8" fill="#f4eeed"/><ellipse cx="111" cy="48" rx="8" ry="11" fill="#f8f4f3"/><rect x="-3" y="52" width="122" height="16" fill="#ead8d8"/><ellipse cx="60" cy="60" rx="40" ry="5" fill="#f1e5e5"/><ellipse cx="25" cy="52" rx="20" ry="4" fill="#e0cccc"/><ellipse cx="85" cy="56" rx="14" ry="4" fill="#e2cece"/></g></svg></div><div class="title lat">Miniskirt</div><svg class="person" width="7" height="9.6" viewBox="0 0 7 9.6" fill="none" stroke="#4a76be"><circle cx="3.5" cy="2.9" r="2.05" stroke-width="1.15"/><path d="M0.6 9.2 C0.8 6.6 2 5.6 3.5 5.6 C5 5.6 6.2 6.6 6.4 9.2" stroke-width="1" opacity=".75"/></svg><div class="auth lat">cusan</div><div class="size">9.39M</div></div><div class="card" style="left:757px;top:72px"><div class="thumb"><svg width="116" height="65" viewBox="0 0 116 65"><rect x="0" y="0" width="116" height="65" fill="#1f4f84"/><g filter="url(#b2)"><rect x="-3" y="-3" width="122" height="24" fill="#0a2452"/><ellipse cx="20" cy="22" rx="24" ry="12" fill="#1f4c86"/><ellipse cx="96" cy="12" rx="24" ry="9" fill="#0d2c60"/><ellipse cx="112" cy="5" rx="2.5" ry="3" fill="#2f5a94"/><ellipse cx="88" cy="13" rx="14" ry="3.4" fill="#4a6a94"/><ellipse cx="3" cy="17" rx="5" ry="5" fill="#6a98d0"/><ellipse cx="12" cy="28" rx="12" ry="5" fill="#3f6faa"/><ellipse cx="30" cy="16" rx="10" ry="4" fill="#173c72"/><ellipse cx="60" cy="32" rx="31" ry="7" fill="#a9c5e6"/><ellipse cx="45" cy="31" rx="9" ry="6" fill="#d9e5f4"/><ellipse cx="82" cy="28" rx="12" ry="4.5" fill="#86aad4"/><ellipse cx="103" cy="28" rx="13" ry="6" fill="#31558a"/><ellipse cx="94" cy="22" rx="8" ry="3" fill="#2a4f86"/><rect x="-3" y="36" width="122" height="12" fill="#36739a"/><ellipse cx="58" cy="42" rx="28" ry="5" fill="#4289aa"/><path d="M-3 32 L10 36 L30 46 L52 58 L60 68 L-3 68 Z" fill="#42709f"/><ellipse cx="14" cy="40" rx="15" ry="3.2" fill="#86b0de" transform="rotate(22 14 40)"/><ellipse cx="34" cy="51" rx="14" ry="2.6" fill="#a6c6ea" transform="rotate(28 34 51)"/><ellipse cx="8" cy="47" rx="9" ry="3" fill="#5a86b8" transform="rotate(20 8 47)"/><ellipse cx="12" cy="59" rx="20" ry="7" fill="#162f54"/><ellipse cx="42" cy="64" rx="12" ry="4" fill="#223f6a"/><path d="M117 22 L104 30 L88 44 L72 58 L66 68 L117 68 Z" fill="#3f6ea4"/><ellipse cx="100" cy="35" rx="12" ry="2.6" fill="#8ab2e0" transform="rotate(-38 100 35)"/><ellipse cx="84" cy="50" rx="12" ry="2.4" fill="#a2c2ea" transform="rotate(-42 84 50)"/><ellipse cx="106" cy="50" rx="12" ry="4" fill="#568ed0" transform="rotate(-20 106 50)"/><ellipse cx="96" cy="60" rx="12" ry="4" fill="#4f86c8" transform="rotate(-10 96 60)"/><ellipse cx="112" cy="38" rx="5" ry="7" fill="#23426e"/><ellipse cx="78" cy="63" rx="8" ry="4" fill="#1d3a66"/><ellipse cx="112" cy="64" rx="8" ry="3" fill="#142c50"/><ellipse cx="60" cy="56" rx="12" ry="5" fill="#4a7fae"/><ellipse cx="58" cy="48" rx="20" ry="3" fill="#6a9cc4"/></g><path d="M0 34 L10 37 L30 47 L52 59 L58 65 L0 65 Z" fill="#000" filter="url(#tW)" opacity="0.25"/><path d="M0 34 L10 37 L30 47 L52 59 L58 65 L0 65 Z" fill="#000" filter="url(#tN)" opacity="0.4"/><path d="M116 24 L104 31 L88 45 L72 59 L68 65 L116 65 Z" fill="#000" filter="url(#tW)" opacity="0.25"/><path d="M116 24 L104 31 L88 45 L72 59 L68 65 L116 65 Z" fill="#000" filter="url(#tN)" opacity="0.4"/><g filter="url(#b2)"><ellipse cx="57.3" cy="20" rx="17.5" ry="17" fill="#dde7f7" opacity="0.6"/></g><g filter="url(#b1)"><circle cx="57.3" cy="19" r="14.2" fill="#fdf0e2"/><ellipse cx="57.3" cy="11" rx="9.5" ry="5.8" fill="#f5c894"/><ellipse cx="50.5" cy="16" rx="4.5" ry="5" fill="#f8d6ac"/><ellipse cx="64" cy="15" rx="4.5" ry="4.5" fill="#f9dcb8"/><ellipse cx="57.3" cy="8" rx="6" ry="3" fill="#f2bc80"/><ellipse cx="57.3" cy="27" rx="13" ry="7" fill="#fffbf8"/></g></svg></div><div class="title"><svg class="cjk" width="20.60" height="11.95" viewBox="0 -140 2000 1160" fill="#d2d6e1" style="" ><text x="0" y="880">日出</text></svg></div><svg class="person" width="7" height="9.6" viewBox="0 0 7 9.6" fill="none" stroke="#4a76be"><circle cx="3.5" cy="2.9" r="2.05" stroke-width="1.15"/><path d="M0.6 9.2 C0.8 6.6 2 5.6 3.5 5.6 C5 5.6 6.2 6.6 6.4 9.2" stroke-width="1" opacity=".75"/></svg><div class="auth"><svg class="cjk" width="27.00" height="10.44" viewBox="0 -140 3000 1160" fill="#8d93a9" style="" ><text x="0" y="880">逸缘体</text></svg></div><div class="size">2.04M</div></div><div class="card" style="left:127px;top:182px"><div class="thumb"><svg width="116" height="65" viewBox="0 0 116 65"><rect x="0" y="0" width="116" height="65" fill="#8c9e58"/><g filter="url(#b2)"><rect x="-3" y="-3" width="34" height="20" fill="#f2f4ef"/><ellipse cx="6" cy="22" rx="8" ry="6" fill="#d4dcc0"/><ellipse cx="8" cy="38" rx="9" ry="14" fill="#ccd692"/><ellipse cx="7" cy="58" rx="12" ry="8" fill="#9cac5c"/><ellipse cx="3" cy="47" rx="4" ry="4" fill="#728444"/><ellipse cx="48" cy="5" rx="18" ry="7" fill="#4f6e34"/><ellipse cx="36" cy="12" rx="6" ry="6" fill="#6a8444"/><ellipse cx="74" cy="6" rx="12" ry="6" fill="#7d9640"/><ellipse cx="98" cy="8" rx="20" ry="9" fill="#7c943a"/><ellipse cx="86" cy="16" rx="6" ry="5" fill="#50702c"/><ellipse cx="109" cy="5" rx="6" ry="4" fill="#dfe4d8"/><ellipse cx="102" cy="22" rx="9" ry="6" fill="#c7a444"/><ellipse cx="88" cy="28" rx="8" ry="8" fill="#91a044"/><ellipse cx="110" cy="34" rx="8" ry="8" fill="#a0a83c"/><ellipse cx="76" cy="24" rx="6" ry="5" fill="#5c7a34"/><ellipse cx="80" cy="40" rx="7" ry="6" fill="#b4b448"/><ellipse cx="94" cy="50" rx="22" ry="12" fill="#6b8848"/><ellipse cx="100" cy="46" rx="8" ry="3.4" fill="#b9783a"/><ellipse cx="106" cy="60" rx="8" ry="4" fill="#b06a34"/><ellipse cx="84" cy="58" rx="8" ry="6" fill="#527640"/><ellipse cx="92" cy="40" rx="6" ry="4" fill="#54804a"/><ellipse cx="50" cy="60" rx="22" ry="7" fill="#8ba24e"/><ellipse cx="30" cy="62" rx="12" ry="5" fill="#a3b45e"/><ellipse cx="66" cy="52" rx="8" ry="6" fill="#7c9a58"/></g><rect x="0" y="0" width="116" height="65" fill="#000" filter="url(#tD)" opacity="0.55"/><rect x="0" y="0" width="116" height="65" fill="#000" filter="url(#tY)" opacity="0.55"/><g filter="url(#b3)"><ellipse cx="63" cy="31" rx="11" ry="14" fill="#c6b6c4" opacity="0.8"/><ellipse cx="58" cy="44" rx="8" ry="6" fill="#bcaaa8" opacity="0.6"/><ellipse cx="36" cy="33" rx="25" ry="20" fill="#e8ede2" opacity="0.7"/><ellipse cx="18" cy="20" rx="12" ry="8" fill="#e4e9dc" opacity="0.8"/><rect x="-3" y="-3" width="32" height="17" fill="#f4f6f1" opacity="0.9"/><ellipse cx="34" cy="50" rx="14" ry="7" fill="#dfe6d2" opacity="0.4"/></g><g filter="url(#b3)"><ellipse cx="33" cy="32" rx="15" ry="12.5" fill="#ffffff"/><ellipse cx="33" cy="32" rx="26" ry="4" fill="#ffffff" opacity="0.55"/><ellipse cx="33" cy="32" rx="4" ry="22" fill="#ffffff" opacity="0.45"/><ellipse cx="33" cy="32" rx="20" ry="3" fill="#ffffff" opacity="0.4" transform="rotate(35 33 32)"/><ellipse cx="33" cy="32" rx="20" ry="3" fill="#ffffff" opacity="0.4" transform="rotate(-35 33 32)"/></g><g filter="url(#b1)"><ellipse cx="33" cy="32" rx="8" ry="7" fill="#ffffff"/></g></svg></div><div class="title"><svg class="cjk" width="41.20" height="11.95" viewBox="0 -140 4000 1160" fill="#d2d6e1" style="" ><text x="0" y="880">秋天的叶</text></svg></div><svg class="person" width="7" height="9.6" viewBox="0 0 7 9.6" fill="none" stroke="#4a76be"><circle cx="3.5" cy="2.9" r="2.05" stroke-width="1.15"/><path d="M0.6 9.2 C0.8 6.6 2 5.6 3.5 5.6 C5 5.6 6.2 6.6 6.4 9.2" stroke-width="1" opacity=".75"/></svg><div class="auth"><svg class="cjk" width="27.00" height="10.44" viewBox="0 -140 3000 1160" fill="#8d93a9" style="" ><text x="0" y="880">逸缘体</text></svg></div><div class="size">11.28M</div></div>
<div id="bottombar" class="abs">
 <div class="abs" style="left:62px;top:5.9px"><svg class="cjk" width="18.40" height="10.67" viewBox="0 -140 2000 1160" fill="#b4b8c8" style="" ><text x="0" y="880">标题</text></svg></div>
 <div class="abs" style="left:82.5px;top:9px;width:2.2px;height:2px;background:#b4b8c8"></div>
 <div class="abs" style="left:82.5px;top:13.5px;width:2.2px;height:2px;background:#b4b8c8"></div>
 <div class="abs" style="left:62px;top:24.2px"><svg class="cjk" width="18.40" height="10.67" viewBox="0 -140 2000 1160" fill="#b4b8c8" style="" ><text x="0" y="880">类型</text></svg></div>
 <div class="abs" style="left:82.5px;top:27.5px;width:2.2px;height:2px;background:#b4b8c8"></div>
 <div class="abs" style="left:82.5px;top:32px;width:2.2px;height:2px;background:#b4b8c8"></div>

 <svg class="abs" style="left:243.8px;top:15.8px" width="11.4" height="11.6" viewBox="0 0 12 12" fill="#3a8be6"><rect x="0.3" y="0.3" width="3.4" height="11.4" rx=".5"/><path d="M11.4 0.8 V11.2 L4.4 6 Z"/></svg>
 <svg class="abs" style="left:280px;top:9.5px" width="24" height="24" viewBox="0 0 24 24" fill="none" stroke="#3583e0"><circle cx="12" cy="12" r="10.4" stroke-width="1.5" fill="#1d2b56"/><path d="M9.5 7.8 V16.2 M14.5 7.8 V16.2" stroke-width="2.2" stroke="#3a86e0"/></svg>
 <svg class="abs" style="left:328.2px;top:15.8px" width="11.4" height="11.6" viewBox="0 0 12 12" fill="#3a8be6"><rect x="8.3" y="0.3" width="3.4" height="11.4" rx=".5"/><path d="M0.6 0.8 V11.2 L7.6 6 Z"/></svg>

 <svg class="abs" style="left:364.6px;top:16.9px" width="11.9" height="11" viewBox="0 0 13 12"><path d="M0.4 4 H3.2 L7.2 0.8 V11.2 L3.2 8 H0.4 Z" fill="#a6aaba"/><path d="M8.8 3.6 C10 4.8 10 7.2 8.8 8.4 M10 2.2 C12 4 12 8 10 9.8" fill="none" stroke="#7e8398" stroke-width="0.9"/></svg>
 <div class="abs" style="left:378px;top:21.6px;width:72px;height:1.6px;background:#2569cc"></div>
 <div class="abs" style="left:450px;top:21.8px;width:73px;height:1.3px;background:#9ea3b4"></div>
 <div class="abs" style="left:447px;top:14px;width:6px;height:17px;border-radius:1.5px;background:#2a7de2"></div>

 <svg class="abs" style="left:526px;top:16px" width="18" height="15" viewBox="0 0 18 15" fill="none" stroke="#3572c8" stroke-width="1.15" stroke-linecap="round" stroke-linejoin="round"><path d="M9.4 3.6 H5.4 C1 3.6 0.6 9.6 4 11.4 M6.2 12.4 H11.6 C15.4 12.4 15.8 8.6 14.2 7 M2.4 9.6 L4.2 11.6 L1.8 12.4"/><circle cx="11.6" cy="4.9" r="2.9" fill="#3f8dec" stroke="none"/></svg>

 <div class="abs" style="left:574px;top:14px;width:60px;height:16.8px;border:1.3px solid #4a82cc;border-radius:9px"></div>
 <div class="abs" style="left:583.8px;top:16.6px"><svg class="cjk" width="18.00" height="10.44" viewBox="0 -140 2000 1160" fill="#8fbcf4" style="" ><text x="0" y="880" font-weight="500">正常</text></svg></div>
 <svg class="abs" style="left:608px;top:19.5px" width="8" height="6" viewBox="0 0 8 6" fill="none" stroke="#4a5c88" stroke-width="1"><path d="M0.6 0.8 L4 4.6 L7.4 0.8"/></svg>
</div>

<div class="abs" style="left:720px;top:481px;width:180px;height:80px;background:#159fe9;overflow:hidden">
 <svg class="abs" style="left:0;top:0" width="180" height="80" viewBox="0 0 180 80">
  <defs><linearGradient id="og" x1="0" y1="0" x2="1" y2="0"><stop offset="0" stop-color="#f59b00"/><stop offset=".07" stop-color="#ffc320"/><stop offset=".16" stop-color="#f7a300"/><stop offset=".84" stop-color="#f7a300"/><stop offset=".93" stop-color="#ffc320"/><stop offset="1" stop-color="#f59b00"/></linearGradient></defs>
  <g transform="translate(86,41) rotate(25)">
   <path fill-rule="evenodd" fill="url(#og)" d="M-66 0 A66 30 0 1 0 66 0 A66 30 0 1 0 -66 0 Z M-57.5 0.6 A58 27.3 0 1 1 58.5 0.6 A58 27.3 0 1 1 -57.5 0.6 Z"/>
  </g>
 </svg>
 <div class="abs" style="left:55.4px;top:17.2px"><svg class="cjk" width="97.00" height="22.50" viewBox="0 -140 5000 1160" fill="#0a0a0a" style="" stroke="#ffffff" stroke-width="95" paint-order="stroke" stroke-linejoin="round"><text x="0" y="880" font-weight="bold">华军软件园</text></svg></div>
 <svg class="abs" style="left:0;top:0" width="180" height="80" viewBox="0 0 180 80">
  <g transform="translate(18.5,44.3) rotate(-46)">
   <ellipse cx="0" cy="0" rx="15" ry="10.4" fill="#ffffff"/>
   <ellipse cx="0" cy="0" rx="13.6" ry="9" fill="#14259a"/>
  </g>
  <path d="M16.4 37.7 L23.7 40 L22.8 44.3 L26.7 43.8 L14.3 53.1 L8.4 44.5 L14.7 43.8 Z" fill="#ffffff" stroke="#ffffff" stroke-width=".6" stroke-linejoin="round"/>
  <text x="28" y="55.9" font-family="Liberation Sans, sans-serif" font-weight="bold" font-style="italic" font-size="20.1" fill="#14259a" stroke="#ffffff" stroke-width="3" paint-order="stroke" stroke-linejoin="round" textLength="122" lengthAdjust="spacingAndGlyphs">NLINEDOWN</text>
  <text x="28" y="55.9" font-family="Liberation Sans, sans-serif" font-weight="bold" font-style="italic" font-size="20.1" fill="#14259a" stroke="#14259a" stroke-width="1.1" textLength="122" lengthAdjust="spacingAndGlyphs">NLINEDOWN</text>
  <text x="151.5" y="56.8" font-family="Liberation Sans, sans-serif" font-weight="bold" font-style="italic" font-size="7.6" fill="#14259a" stroke="#ffffff" stroke-width="1.4" paint-order="stroke" textLength="20.5" lengthAdjust="spacingAndGlyphs">.NET</text>
 </svg>
</div>

</body></html>
